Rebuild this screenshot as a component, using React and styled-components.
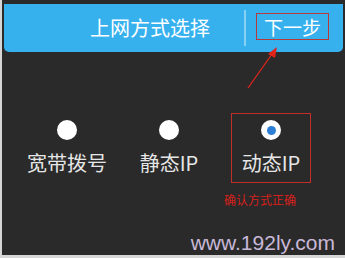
import styled, { createGlobalStyle } from "styled-components";

const GlobalStyle = createGlobalStyle`
    html, body {
        margin: 0;
        padding: 0;
        background: #d6d6d6;
    }
    body {
        font-family: "Noto Sans CJK SC", "Noto Sans", sans-serif;
    }
`;

const options = [
    { label: "宽带拨号", checked: false },
    { label: "静态IP", checked: false },
    { label: "动态IP", checked: true, hint: "确认方式正确" },
];

const App = () => {
    return (
        <>
            <GlobalStyle />
            <Screen>
                <Header>
                    <Title>上网方式选择</Title>
                    <Divider />
                    <NextButton>下一步</NextButton>
                </Header>
                <Arrow width="40" height="50" viewBox="0 0 40 50">
                    <line x1="4" y1="44" x2="28" y2="10" stroke="#e0241b" strokeWidth="1.3" />
                    <polygon points="33,3 24,10 31,14" fill="#e0241b" />
                </Arrow>
                <Options>
                    {options.map((item, i) => (
                        <Column key={i}>
                            <Option $selected={item.checked}>
                                <Radio $checked={item.checked} />
                                <Label>{item.label}</Label>
                            </Option>
                            {item.hint && <Hint>{item.hint}</Hint>}
                        </Column>
                    ))}
                </Options>
                <Footer>
                    <Watermark>www.192ly.com</Watermark>
                </Footer>
            </Screen>
        </>
    );
};
export default App;

const Screen = styled.div`
    position: relative;
    width: 339px;
    height: 251px;
    margin-left: 2px;
    padding: 4px 2px 0 2px;
    background-color: #2a2a2a;
    display: flex;
    flex-direction: column;
`;

const Header = styled.div`
    height: 48px;
    background-color: #36b1ee;
    border-radius: 0 0 5px 5px;
    display: flex;
    align-items: center;
`;

const Title = styled.div`
    width: 240px;
    box-sizing: border-box;
    padding-left: 86px;
    color: #ffffff;
    font-size: 20px;
    line-height: 24px;
    white-space: nowrap;
`;

const Divider = styled.div`
    width: 2px;
    height: 36px;
    background-color: #86d0f3;
`;

const NextButton = styled.div`
    margin-left: 10px;
    width: 73px;
    height: 27px;
    box-sizing: border-box;
    border: 1px solid #b53a3a;
    color: #ffffff;
    font-size: 19px;
    line-height: 25px;
    text-align: center;
    margin-top: -3px;
`;

const Arrow = styled.svg`
    position: absolute;
    left: 242px;
    top: 44px;
`;

const Options = styled.div`
    margin-top: 61px;
    padding-left: 12px;
    display: flex;
`;

const Column = styled.div`
    width: 102px;
    display: flex;
    flex-direction: column;
    align-items: center;
`;

const Option = styled.div`
    width: 80px;
    height: 70px;
    box-sizing: border-box;
    border: 1px solid ${(props) => (props.$selected ? "#c0302b" : "transparent")};
    display: flex;
    flex-direction: column;
    align-items: center;
    padding-top: 6px;
`;

const Radio = styled.div`
    width: 20px;
    height: 20px;
    border-radius: 50%;
    background-color: #ffffff;
    display: flex;
    align-items: center;
    justify-content: center;

    &::after {
        content: "";
        width: 9px;
        height: 9px;
        border-radius: 50%;
        background-color: ${(props) => (props.$checked ? "#2d7fd6" : "transparent")};
    }
`;

const Label = styled.div`
    margin-top: 11px;
    color: #e6e6e6;
    font-size: 20px;
    line-height: 24px;
    white-space: nowrap;
`;

const Hint = styled.div`
    margin-top: 9px;
    margin-right: 22px;
    color: #d8201c;
    font-size: 12px;
    line-height: 16px;
    white-space: nowrap;
`;

const Footer = styled.div`
    margin-top: auto;
    padding: 0 8px 0 0;
    display: flex;
    justify-content: flex-end;
`;

const Watermark = styled.div`
    font-family: "Liberation Sans", Arial, sans-serif;
    font-size: 21px;
    line-height: 24px;
    color: #c9b9d9;
`;
